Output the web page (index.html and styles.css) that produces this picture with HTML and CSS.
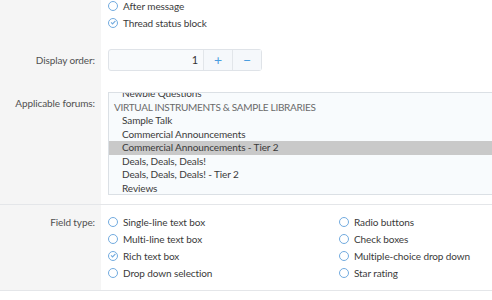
FILE: index.html
```html
<!DOCTYPE html>
<html lang="en">
<head>
  <meta charset="UTF-8" />
  <meta name="viewport" content="width=device-width, initial-scale=1.0" />
  <title>Custom Field Options</title>

  <link rel="stylesheet" href="styles.css">

</head>

<body>
    <div class="form-block">
        <div class="form-row">
            <div class="row-label"></div>
            <div class="row-input">
                <ul class="radio-list list-top">
                    <li><span class="radio"></span>After message</li>
                    <li><span class="radio checked"><svg viewBox="0 0 11 11"><path d="M3.2 5.7 L4.8 7.2 L7.8 4.1"/></svg></span>Thread status block</li>
                </ul>
            </div>
        </div>
        <div class="form-row row-order">
            <div class="row-label">Display order:</div>
            <div class="row-input">
                <div class="spinbox">
                    <div class="spin-value">1</div>
                    <div class="spin-btn">+</div>
                    <div class="spin-btn">&minus;</div>
                </div>
            </div>
        </div>
        <div class="form-row row-forums">
            <div class="row-label">Applicable forums:</div>
            <div class="row-input">
                <div class="listbox">
                    <div class="listbox-inner">
                        <div class="opt">Newbie Questions</div>
                        <div class="opt group">VIRTUAL INSTRUMENTS &amp; SAMPLE LIBRARIES</div>
                        <div class="opt">Sample Talk</div>
                        <div class="opt">Commercial Announcements</div>
                        <div class="opt selected">Commercial Announcements - Tier 2</div>
                        <div class="opt">Deals, Deals, Deals!</div>
                        <div class="opt">Deals, Deals, Deals! - Tier 2</div>
                        <div class="opt">Reviews</div>
                    </div>
                </div>
            </div>
        </div>
    </div>

    <div class="form-block block-type">
        <div class="form-row">
            <div class="row-label">Field type:</div>
            <div class="row-input">
                <ul class="radio-list two-cols">
                    <li><span class="radio"></span>Single-line text box</li>
                    <li><span class="radio"></span>Radio buttons</li>
                    <li><span class="radio"></span>Multi-line text box</li>
                    <li><span class="radio"></span>Check boxes</li>
                    <li><span class="radio checked"><svg viewBox="0 0 11 11"><path d="M3.2 5.7 L4.8 7.2 L7.8 4.1"/></svg></span>Rich text box</li>
                    <li><span class="radio"></span>Multiple-choice drop down</li>
                    <li><span class="radio"></span>Drop down selection</li>
                    <li><span class="radio"></span>Star rating</li>
                </ul>
            </div>
        </div>
    </div>

    <div class="footer-tabs">
        <span class="tab">Leave options</span>
        <span class="tab link">Field</span>
    </div>
</body>
</html>
```

FILE: styles.css
```css
body {
  font-family: Lato, 'Open Sans', sans-serif;
  font-size: 10px;
  letter-spacing: -0.1px;
  color: #3a3a3a;
  background-color: #fff;
  margin: 0;
  overflow: hidden;
}
.form-block {
  border-bottom: 1px solid #e4e6e9;
}
.form-row {
  display: flex;
}
.row-label {
  width: 95px;
  flex: none;
  padding-right: 6px;
  background-color: #f5f5f5;
  text-align: right;
  color: #505050;
}
.row-input {
  flex: 1;
  padding-left: 7px;
}
.radio-list {
  list-style: none;
  margin: 0;
  padding: 0;
}
.radio-list li {
  display: flex;
  align-items: center;
  height: 17px;
  white-space: nowrap;
}
.list-top {
  margin-top: -3px;
  padding-bottom: 18px;
}
.radio {
  width: 8px;
  height: 8px;
  border: 1.3px solid #72abdf;
  border-radius: 50%;
  margin-right: 5px;
  flex: none;
  position: relative;
}
.radio svg {
  position: absolute;
  left: -1.2px;
  top: -1.2px;
  width: 10.5px;
  height: 10.5px;
  fill: none;
  stroke: #72abdf;
  stroke-width: 1.2;
}
.row-order .row-label {
  line-height: 22px;
  padding-bottom: 21px;
}
.spinbox {
  display: flex;
  width: 152px;
  height: 20px;
  border: 1px solid #dfe3e8;
  border-radius: 3px;
  background-color: #f8fafc;
}
.spin-value {
  flex: 1;
  text-align: right;
  padding-right: 5px;
  line-height: 20px;
  font-size: 11px;
  color: #333;
}
.spin-btn {
  width: 28px;
  border-left: 1px solid #e2e6ea;
  text-align: center;
  line-height: 19px;
  font-size: 14px;
  color: #4a9ee0;
  background-color: #f5f8fb;
}
.row-forums .row-label {
  padding-top: 5px;
}
.row-forums .row-input {
  padding-bottom: 9px;
}
.listbox {
  height: 101px;
  border: 1px solid #dbe0e5;
  border-right: none;
  background-color: #f8fbfd;
  overflow: hidden;
}
.listbox-inner {
  margin-top: -6px;
}
.opt {
  height: 13.5px;
  line-height: 13.5px;
  padding-left: 13px;
  white-space: nowrap;
  color: #3a3a3a;
}
.opt.group {
  padding-left: 5px;
  letter-spacing: -0.3px;
  color: #6a6a6a;
}
.opt.selected {
  background-color: #c9c9c9;
}
.block-type {
  border-top: 1px solid #e4e6e9;
  margin-top: -1px;
}
.block-type .row-label {
  padding-top: 11px;
}
.two-cols {
  display: grid;
  grid-template-columns: 231px 1fr;
  padding-top: 8px;
  padding-bottom: 9px;
}
.footer-tabs {
  padding: 8px 0 0 6px;
  font-size: 11px;
  color: #555;
}
.footer-tabs .tab {
  margin-right: 10px;
}
.footer-tabs .link {
  color: #4a8fd0;
}
```
